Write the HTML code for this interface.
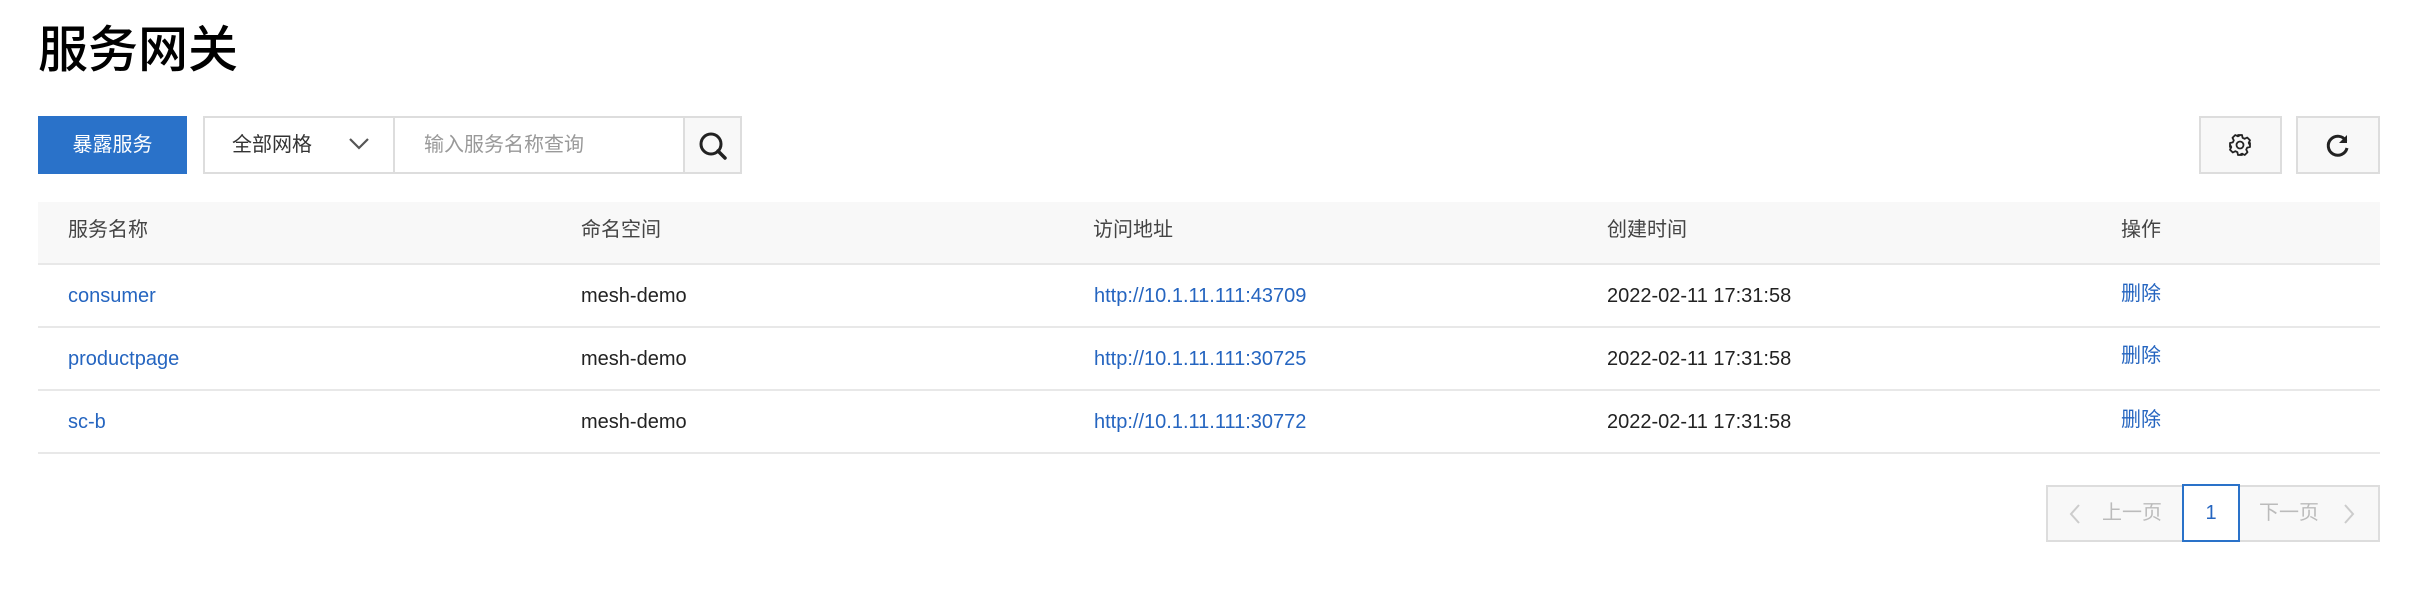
<!DOCTYPE html>
<html><head><meta charset="utf-8"><style>
*{margin:0;padding:0;box-sizing:border-box}
body{width:2418px;height:610px;background:#fff;font-family:"Liberation Sans","Noto Sans CJK SC",sans-serif;position:relative;overflow:hidden;color:#222}
.a{position:absolute}
.title{left:38px;top:18px;font-size:50px;line-height:64px;color:#000;font-weight:500}
.btn{left:38px;top:116px;width:149px;height:58px;background:#2a72c9;color:#fff;font-size:20px;line-height:58px;text-align:center}
.box{top:116px;height:58px;border:2px solid #ddd;background:#fff}
.th{top:202px;left:38px;width:2342px;height:63px;background:#f8f8f8;border-bottom:2px solid #e8e8e8}
.cell{font-size:20px;line-height:24px}
.hd{color:#444;top:218px}
.ln{left:38px;width:2342px;height:2px;background:#e8e8e8}
.blue{color:#2565c0}
</style></head><body>
<div class="a title">服务网关</div>
<div class="a btn">暴露服务</div>
<div class="a box" style="left:203px;width:482px"></div>
<div class="a" style="left:393px;top:116px;width:2px;height:58px;background:#ddd"></div>
<div class="a cell" style="left:232px;top:133px;color:#333">全部网格</div>
<svg class="a" style="left:348px;top:136px" width="22" height="16" viewBox="0 0 22 16"><path d="M2 3 L11 12 L20 3" fill="none" stroke="#555" stroke-width="2.2"/></svg>
<div class="a cell" style="left:424px;top:133px;color:#999">输入服务名称查询</div>
<div class="a box" style="left:683px;width:59px;background:#f8f8f8"></div>
<svg class="a" style="left:697px;top:130px" width="32" height="32" viewBox="0 0 32 32"><circle cx="14" cy="14" r="10" fill="none" stroke="#222" stroke-width="3"/><path d="M21 21 L28 28" stroke="#222" stroke-width="3.5" stroke-linecap="round"/></svg>
<div class="a box" style="left:2199px;width:83px;background:#f8f8f8"></div>
<svg class="a" style="left:2228px;top:133px" width="24" height="24" viewBox="0 0 24 24"><path d="M10 2h4l.6 2.8 2 1 2.6-1.3 2.8 2.8-1.3 2.6 1 2L22 10v4l-2.8.6-1 2 1.3 2.6-2.8 2.8-2.6-1.3-2 1L14 22h-4l-.6-2.8-2-1-2.6 1.3-2.8-2.8 1.3-2.6-1-2L2 14v-4l2.8-.6 1-2L4.5 4.8 7.3 2l2.6 1.3 2-1z" fill="none" stroke="#222" stroke-width="1.8" stroke-linejoin="round"/><circle cx="12" cy="12" r="3.5" fill="none" stroke="#222" stroke-width="1.8"/></svg>
<div class="a box" style="left:2296px;width:84px;background:#f8f8f8"></div>
<svg class="a" style="left:2325px;top:133px" width="26" height="26" viewBox="0 0 26 26"><path d="M21 8 A9.5 9.5 0 1 0 22 15" fill="none" stroke="#222" stroke-width="3"/><path d="M22 2 V10 H14 Z" fill="#222"/></svg>
<div class="a th"></div>
<div class="a cell hd" style="left:68px">服务名称</div>
<div class="a cell hd" style="left:581px">命名空间</div>
<div class="a cell hd" style="left:1093px">访问地址</div>
<div class="a cell hd" style="left:1607px">创建时间</div>
<div class="a cell hd" style="left:2121px">操作</div>
<div class="a cell blue" style="left:68px;top:284px">consumer</div>
<div class="a cell" style="left:581px;top:284px">mesh-demo</div>
<div class="a cell blue" style="left:1094px;top:284px">http://10.1.11.111:43709</div>
<div class="a cell" style="left:1607px;top:284px">2022-02-11 17:31:58</div>
<div class="a cell blue" style="left:2121px;top:282px">删除</div>
<div class="a ln" style="top:326px"></div>
<div class="a cell blue" style="left:68px;top:347px">productpage</div>
<div class="a cell" style="left:581px;top:347px">mesh-demo</div>
<div class="a cell blue" style="left:1094px;top:347px">http://10.1.11.111:30725</div>
<div class="a cell" style="left:1607px;top:347px">2022-02-11 17:31:58</div>
<div class="a cell blue" style="left:2121px;top:344px">删除</div>
<div class="a ln" style="top:389px"></div>
<div class="a cell blue" style="left:68px;top:410px">sc-b</div>
<div class="a cell" style="left:581px;top:410px">mesh-demo</div>
<div class="a cell blue" style="left:1094px;top:410px">http://10.1.11.111:30772</div>
<div class="a cell" style="left:1607px;top:410px">2022-02-11 17:31:58</div>
<div class="a cell blue" style="left:2121px;top:408px">删除</div>
<div class="a ln" style="top:452px"></div>
<div class="a" style="left:2046px;top:485px;width:334px;height:57px;border:2px solid #ddd;background:#f8f8f8"></div>
<svg class="a" style="left:2068px;top:503px" width="14" height="22" viewBox="0 0 14 22"><path d="M11 2 L3 11 L11 20" fill="none" stroke="#ccc" stroke-width="2"/></svg>
<div class="a cell" style="left:2102px;top:501px;color:#bbb">上一页</div>
<div class="a" style="left:2182px;top:484px;width:58px;height:58px;border:2px solid #2a72c9;background:#fff;color:#2565c0;font-size:20px;line-height:54px;text-align:center">1</div>
<div class="a cell" style="left:2259px;top:501px;color:#bbb">下一页</div>
<svg class="a" style="left:2342px;top:503px" width="14" height="22" viewBox="0 0 14 22"><path d="M3 2 L11 11 L3 20" fill="none" stroke="#ccc" stroke-width="2"/></svg>
</body></html>
